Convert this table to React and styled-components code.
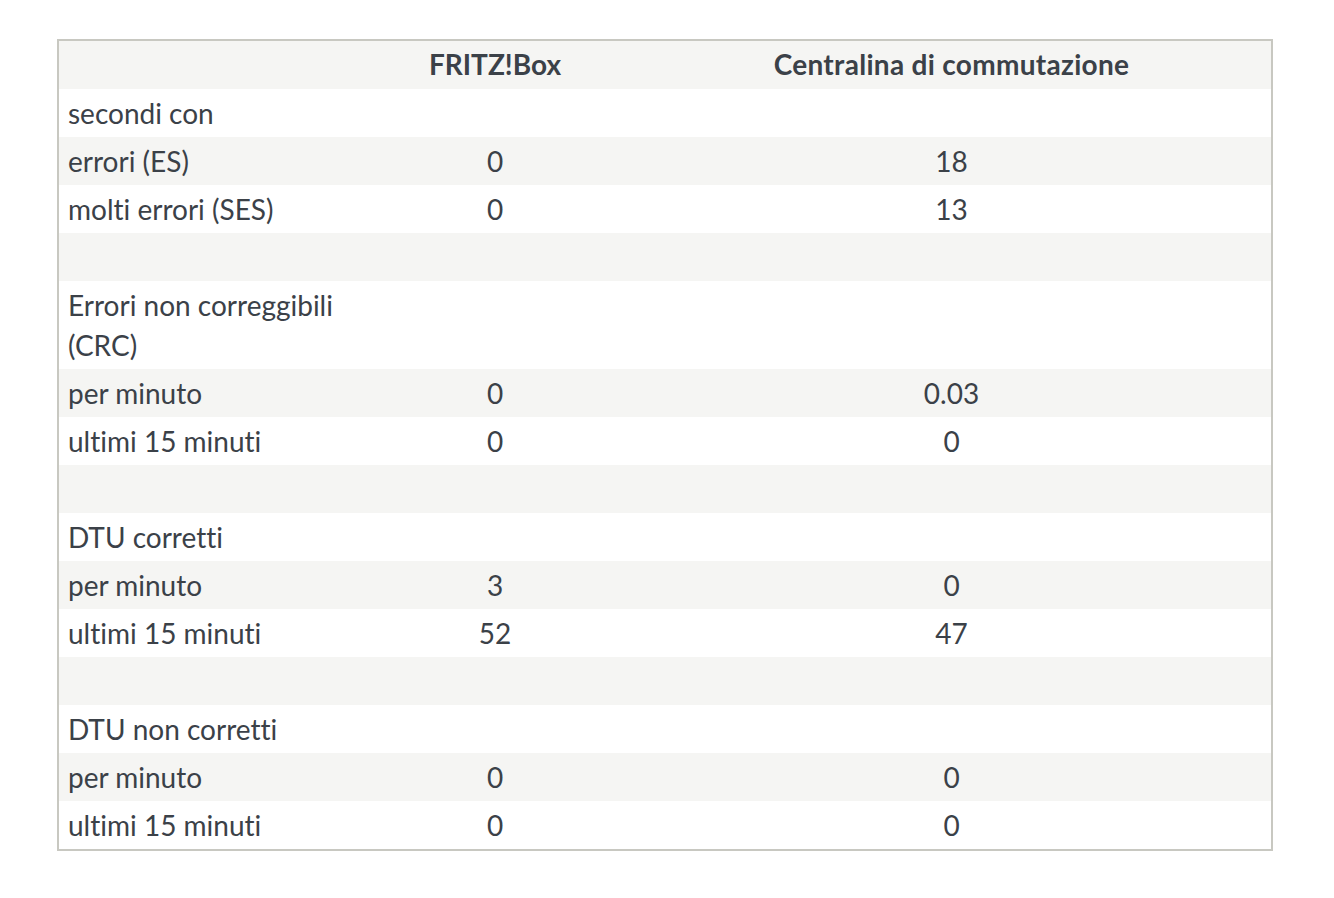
import React from "react";
import styled, { createGlobalStyle } from "styled-components";

const Global = createGlobalStyle`
  html, body { margin: 0; padding: 0; background: #ffffff; }
  body { font-family: Lato, "Noto Sans", sans-serif; }
`;

const Page = styled.div`
  padding: 39px 0 0 57px;
`;

const Table = styled.table`
  width: 1216px;
  border-collapse: collapse;
  border: 2px solid #c8c8c1;
  table-layout: fixed;
  font-family: Lato, "Noto Sans", sans-serif;
  font-size: 28px;
  font-variant-ligatures: none;
  color: #3b4148;
`;

const Row = styled.tr`
  background: ${(p) => (p.$shade ? "#f5f5f3" : "#ffffff")};
`;

const Head = styled.th`
  font-weight: 700;
  text-align: center;
  line-height: 40px;
  padding: 3px 10px 5px;
  letter-spacing: ${(p) => (p.$wide ? "0.3px" : "0")};
  width: ${(p) => (p.$w ? `${p.$w}px` : "auto")};
`;

const Label = styled.td`
  text-align: left;
  line-height: 40px;
  padding: 4px 10px 4px 9px;
  vertical-align: top;
  white-space: nowrap;
`;

const Value = styled.td`
  text-align: center;
  line-height: 40px;
  padding: 4px 10px;
`;

const rows = [
  ["secondi con", "", ""],
  ["errori (ES)", "0", "18"],
  ["molti errori (SES)", "0", "13"],
  [null],
  [["Errori non correggibili", "(CRC)"], "", ""],
  ["per minuto", "0", "0.03"],
  ["ultimi 15 minuti", "0", "0"],
  [null],
  ["DTU corretti", "", ""],
  ["per minuto", "3", "0"],
  ["ultimi 15 minuti", "52", "47"],
  [null],
  ["DTU non corretti", "", ""],
  ["per minuto", "0", "0"],
  ["ultimi 15 minuti", "0", "0"],
];

export default function App() {
  return (
    <Page>
      <Global />
      <Table>
        <thead>
          <Row $shade>
            <Head $w={279}></Head>
            <Head $w={254}>FRITZ!Box</Head>
            <Head $wide>Centralina di commutazione</Head>
          </Row>
        </thead>
        <tbody>
          {rows.map((r, i) => {
            const shade = i % 2 === 1;
            if (r[0] === null) {
              return (
                <Row key={i} $shade={shade}>
                  <Label>&nbsp;</Label>
                  <Value></Value>
                  <Value></Value>
                </Row>
              );
            }
            const label = Array.isArray(r[0]) ? (
              <>
                {r[0][0]}
                <br />
                {r[0][1]}
              </>
            ) : (
              r[0]
            );
            return (
              <Row key={i} $shade={shade}>
                <Label>{label}</Label>
                <Value>{r[1]}</Value>
                <Value>{r[2]}</Value>
              </Row>
            );
          })}
        </tbody>
      </Table>
    </Page>
  );
}
